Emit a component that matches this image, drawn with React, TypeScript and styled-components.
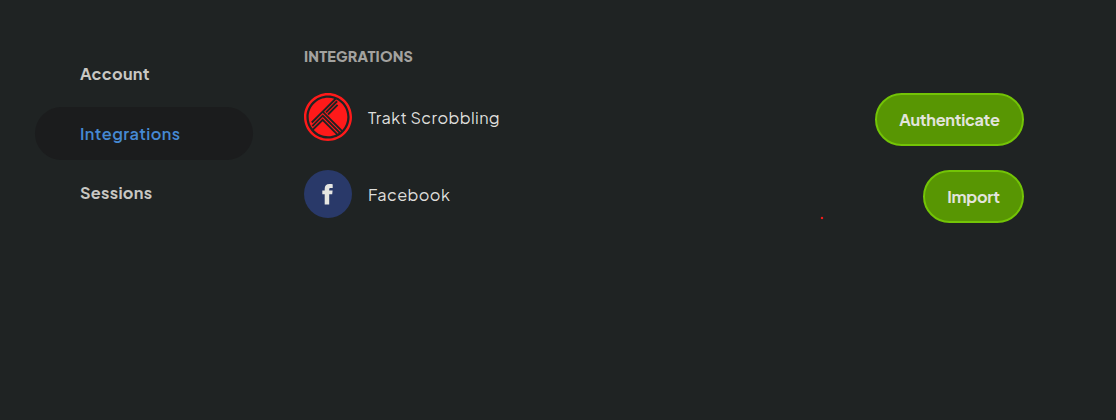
import React from 'react';
import styled, { createGlobalStyle } from 'styled-components';

const GlobalStyle = createGlobalStyle`
  *, *::before, *::after { box-sizing: border-box; }
  body {
    margin: 0;
    background: #1f2323;
    font-family: 'Plus Jakarta Sans', Inter, 'Liberation Sans', sans-serif;
    font-size: 16px;
  }
`;

const Page = styled.div`
  position: relative;
  display: flex;
  align-items: flex-start;
  height: 420px;
  padding: 0 92px 0 35px;
  overflow: hidden;
`;

const Sidebar = styled.nav`
  display: flex;
  flex-direction: column;
  gap: 7px;
  width: 218px;
  margin-top: 47px;
`;

const NavItem = styled.a<{ $active?: boolean }>`
  display: flex;
  align-items: center;
  height: ${(p) => (p.$active ? 53 : 52)}px;
  margin-top: ${(p) => (p.$active ? 1 : 0)}px;
  padding-left: 45px;
  border-radius: 27px;
  background: ${(p) => (p.$active ? '#1b1c1d' : 'transparent')};
  color: ${(p) => (p.$active ? '#4689d3' : '#c8c7c3')};
  font-size: 16.3px;
  font-weight: ${(p) => (p.$active ? 600 : 750)};
  letter-spacing: ${(p) => (p.$active ? 0.44 : 0.3)}px;

  &:last-child {
    margin-top: -1px;
  }
`;

const Content = styled.main`
  flex: 1;
  margin-left: 51px;
  padding-top: 46px;
`;

const Heading = styled.h2`
  margin: 0 0 27px;
  color: #a3a29f;
  font-size: 14.4px;
  font-weight: 800;
  line-height: 20px;
  letter-spacing: 0.18px;
`;

const List = styled.div`
  display: flex;
  flex-direction: column;
  gap: 24px;
`;

const Row = styled.div`
  display: flex;
  align-items: flex-start;
  height: 53px;
`;

const Logo = styled.svg`
  flex: none;
  width: 48px;
  height: 48px;
`;

const Name = styled.span`
  flex: 1;
  margin-left: 16px;
  color: #dededb;
  font-size: 16.3px;
  line-height: 50px;
  letter-spacing: 0.38px;
`;

const Button = styled.button<{ $width: number }>`
  display: flex;
  align-items: center;
  justify-content: center;
  width: ${(p) => p.$width}px;
  height: 53px;
  padding: 0;
  border: 2px solid #73c406;
  border-radius: 27px;
  background: #589603;
  color: #e2e4dc;
  font: inherit;
  font-size: 16.3px;
  font-weight: 750;
  letter-spacing: -0.28px;
`;

const Dot = styled.i`
  position: absolute;
  left: 821px;
  top: 217px;
  width: 2px;
  height: 2px;
  background: #f01a1a;
  box-shadow: 0 0 1px #f01a1a;
`;

const TraktLogo = () => (
  <Logo viewBox="0 0 144.8 144.8" fill="#ff1a1a">
    <path d="M29.5,111.8c10.6,11.6,25.9,18.8,42.9,18.8c8.7,0,16.9-1.9,24.3-5.3L56.3,85L29.5,111.8z" />
    <path d="M56.1,60.6L25.5,91.1L21.4,87l32.2-32.2h0l37.6-37.6c-5.9-2-12.2-3.1-18.8-3.1c-32.2,0-58.3,26.1-58.3,58.3c0,13.1,4.3,25.2,11.7,35l30.5-30.5l2.1,2l43.7,43.7c0.9-0.5,1.7-1,2.5-1.6L56.3,72.7L27,102l-4.1-4.1l33.4-33.4l2.1,2l51,50.9c0.8-0.6,1.5-1.3,2.2-1.9l-55-55L56.1,60.6z" />
    <path d="M115.7,111.4c9.3-10.3,15-24,15-39c0-23.4-13.8-43.5-33.6-52.8L60.4,56.2L115.7,111.4z M74.5,66.8l-4.1-4.1l28.9-28.9l4.1,4.1L74.5,66.8z M101.9,27.1L68.6,60.4l-4.1-4.1L97.8,23L101.9,27.1z" />
    <path d="M72.4,144.8C32.5,144.8,0,112.3,0,72.4C0,32.5,32.5,0,72.4,0s72.4,32.5,72.4,72.4C144.8,112.3,112.3,144.8,72.4,144.8z M72.4,7.3C36.5,7.3,7.3,36.5,7.3,72.4s29.2,65.1,65.1,65.1s65.1-29.2,65.1-65.1S108.3,7.3,72.4,7.3z" />
  </Logo>
);

const FacebookLogo = () => (
  <Logo viewBox="0 0 48 48">
    <circle cx="24" cy="24" r="24" fill="#293969" />
    <path
      fill="#e6e6e2"
      d="M20.7 34.5V24.3h-2.4v-3.9h2.4v-1.7c0-3 1.6-4.8 4.7-4.8 1.4 0 2.6.1 3.3.3v3.7h-2c-1.1 0-1.5.5-1.5 1.4v1.1h3.4l-.4 3.9h-3v10.2z"
    />
  </Logo>
);

export default function App() {
  return (
    <>
      <GlobalStyle />
      <Page>
        <Sidebar>
          <NavItem>Account</NavItem>
          <NavItem $active>Integrations</NavItem>
          <NavItem>Sessions</NavItem>
        </Sidebar>
        <Content>
          <Heading>INTEGRATIONS</Heading>
          <List>
            <Row>
              <TraktLogo />
              <Name>Trakt Scrobbling</Name>
              <Button $width={149}>Authenticate</Button>
            </Row>
            <Row>
              <FacebookLogo />
              <Name>Facebook</Name>
              <Button $width={101}>Import</Button>
            </Row>
          </List>
        </Content>
        <Dot />
      </Page>
    </>
  );
}
